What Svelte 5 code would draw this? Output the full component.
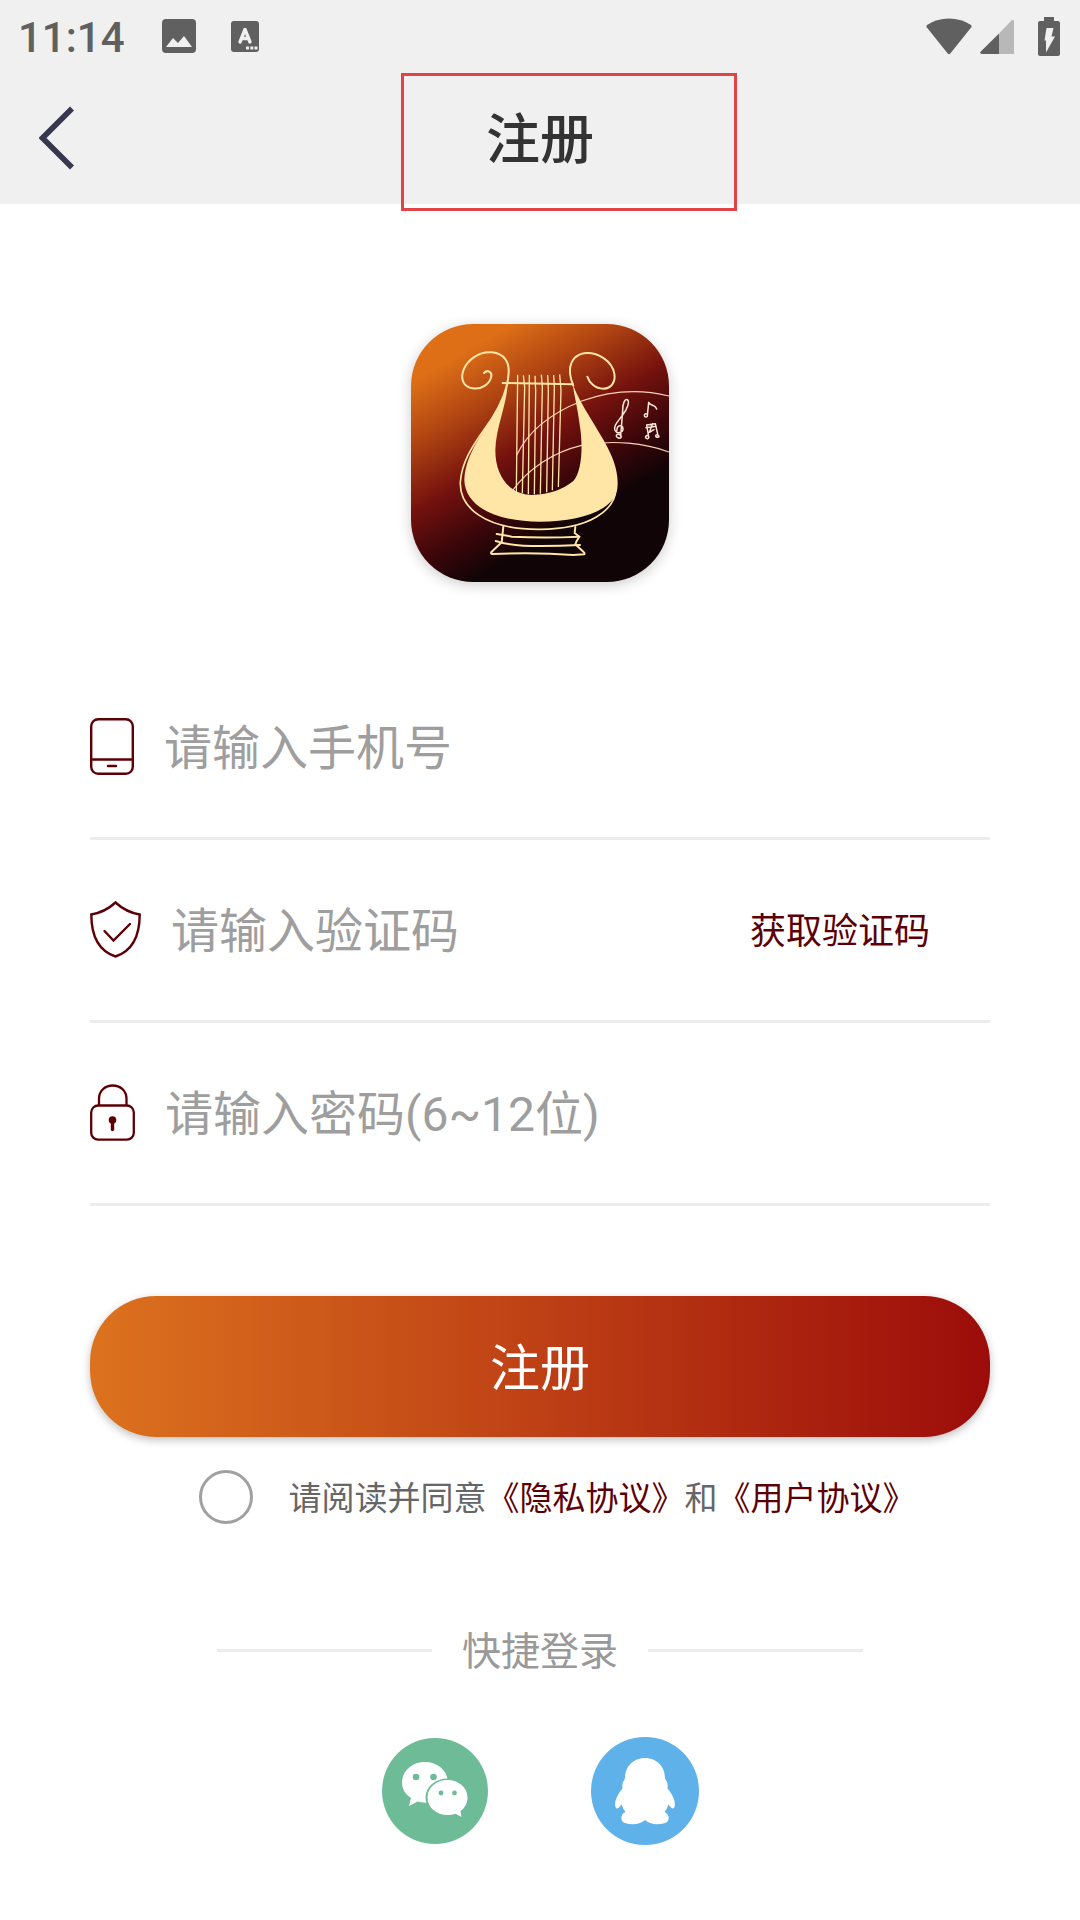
<script>
  let phone = $state('');
  let code = $state('');
  let password = $state('');
  let agreed = $state(false);
</script>

<div class="page">
  <header class="top">
    <div class="status">
      <span class="clock">11:14</span>
      <svg class="pic" width="34" height="34" viewBox="0 0 34 34" aria-hidden="true">
        <rect width="34" height="34" rx="4" fill="#606060" />
        <path d="M4 28 L11 19 L16 24 L22 17 L30 28 Z" fill="#f0f0f0" />
      </svg>
      <svg class="lang" width="28" height="31" viewBox="0 0 28 31" aria-hidden="true">
        <rect width="28" height="31" rx="3" fill="#606060" />
        <path d="M9 21 L14 8.500 L19 21 M10.500 17.500 H17.500" fill="none" stroke="#f0f0f0" stroke-width="3.400" stroke-linecap="round" stroke-linejoin="round" />
        <path d="M15 25.500h3v3h-3z M19.300 25.500h3v3h-3z M23.500 25.500h3v3h-3z" fill="#f0f0f0" />
      </svg>
      <span class="spacer"></span>
      <svg class="wifi" width="46" height="37" viewBox="0 0 46 37" aria-hidden="true">
        <path d="M1 7 Q10.500 0.500 23 0.500 Q35.500 0.500 45 7 Q46 8 45.300 9.200 L24.300 35.500 Q23 37 21.700 35.500 L0.700 9.200 Q0 8 1 7Z" fill="#606060" />
      </svg>
      <svg class="cell" width="34" height="35" viewBox="0 0 34 35" aria-hidden="true">
        <path d="M19 14.500 L31.500 1.500 Q34 -0.500 34 2.500 V35 H19Z" fill="#b8b8b8" />
        <path d="M19 14.500 V35 H2 Q-1 34.500 0.800 32.500Z" fill="#606060" />
      </svg>
      <svg width="22" height="39" viewBox="0 0 22 39" aria-hidden="true">
        <path d="M6 0H16V4H20Q22 4 22 6V37Q22 39 20 39H2Q0 39 0 37V6Q0 4 2 4H6Z" fill="#606060" />
        <path d="M8.500 11H15.500L13.500 19.500H17L8 35.500V23.500H6.500Z" fill="#f0f0f0" />
      </svg>
    </div>
    <div class="nav">
      <button class="back" type="button" aria-label="返回">
        <svg width="36" height="64" viewBox="0 0 36 64" aria-hidden="true">
          <path d="M33 2.500 L3.500 32 L33 61.500" fill="none" stroke="#37384f" stroke-width="5.600" />
        </svg>
      </button>
      <h1>注册</h1>
    </div>
    <div class="mark"></div>
  </header>

  <main>
    <svg class="logo" viewBox="33 41 774 774" role="img" aria-label="logo">
      <defs>
        <linearGradient id="wine" gradientUnits="userSpaceOnUse" x1="104" y1="177" x2="435" y2="741">
          <stop offset="0" stop-color="#de6f17" />
          <stop offset="0.250" stop-color="#af4412" />
          <stop offset="0.510" stop-color="#75120e" />
          <stop offset="0.740" stop-color="#3b060a" />
          <stop offset="0.930" stop-color="#100406" />
        </linearGradient>
      </defs>
      <rect x="33" y="41" width="774" height="774" fill="url(#wine)" />
      <g fill="none" stroke="#fbd3b4" stroke-width="3.500">
        <path d="M350 435 C385 360 450 310 545 272 C640 238 730 238 807 257" />
        <path d="M338 540 C385 475 460 425 545 405 C640 388 735 398 807 425" />
      </g>
      <g fill="none" stroke="#ffe6a6" stroke-width="4">
        <path d="M353 193 L349 545 M370 195 L374 230 L367 548 M388 193 L385 552 M405 196 L407 240 L403 552 M424 193 L427 230 L421 550 M443 194 L445 240 L440 546 M461 194 L463 230 L457 540 M479 192 L483 240 L475 530" />
      </g>
      <g fill="none" stroke="#ffe6a6" stroke-width="6" stroke-linecap="round" stroke-linejoin="round">
        <path d="M308 218 L518 222" />
        <path d="M252 188 C262 177 276 184 274 198 C270 220 246 238 218 234 C190 230 181 206 190 180 C202 148 238 122 276 126 C312 130 328 154 326 186 C325 204 324 212 320 226" />
        <path d="M320 226 C306 280 282 318 252 358 C216 408 185 458 181 515 C178 590 252 658 420 657 C570 656 645 600 648 535" stroke-width="5" />
        <path d="M562 199 C568 218 586 235 610 235 C635 235 647 214 643 190 C636 152 594 124 552 129 C522 134 508 158 510 188 C511 204 516 216 520 226" />
        <path d="M310 648 L305 696 L275 724 Q270 730 278 731 Q410 726 520 734 L552 732 Q556 730 550 724 L526 702 L530 692 L538 679 L524 668 L526 650" />
        <path d="M290 671 Q310 674 335 679 Q430 684 538 679 M287 692 Q325 704 370 706 Q450 708 540 704" />
      </g>
      <path d="M323 224 C318 290 288 350 286 420 C286 500 330 552 395 554 C450 552 488 538 520 512 C548 480 548 400 540 350 C534 300 524 262 518 222 C545 290 592 352 622 410 C648 460 656 500 652 535 C642 600 540 634 420 634 C290 634 196 590 193 510 C195 440 240 380 272 328 C300 284 312 254 323 224Z" fill="#ffe6a6" />
      <g fill="none" stroke="#fde8d8" stroke-width="4.500" stroke-linecap="round" stroke-linejoin="round">
        <path d="M657 383 C645 382 648 368 657 372 C668 378 664 386 655 383 M662 378 L668 300 C668 280 674 265 682 268 C690 274 682 296 668 314 C652 336 640 346 645 360 C652 372 670 368 669 354 C667 342 650 344 651 360" />
        <path d="M742 316 L746 276 C752 288 766 282 770 296 M742 312 C732 306 730 320 738 320 Q743 320 742 312" />
        <path d="M746 380 L740 344 L766 340 L774 376 M738 352 L768 348 M746 378 C738 370 732 384 742 385 Q748 384 746 378 M774 374 C766 370 764 382 774 381 Q780 378 774 374 M758 340 L748 366 L762 358" />
      </g>
    </svg>

    <form onsubmit={(e) => e.preventDefault()}>
      <div class="row">
        <label for="phone" aria-label="手机号">
          <svg width="44" height="57" viewBox="0 0 44 57" fill="none" stroke="#5c0006" stroke-width="2.400" aria-hidden="true">
            <rect x="1.200" y="1.200" width="41.600" height="54.600" rx="7" />
            <path d="M1 41.500H43M18 48H26" stroke-linecap="round" />
          </svg>
        </label>
        <input id="phone" type="tel" placeholder="请输入手机号" bind:value={phone} />
      </div>
      <div class="row">
        <label for="code" aria-label="验证码">
          <svg width="51" height="57" viewBox="0 0 51 57" fill="none" stroke="#5c0006" stroke-width="2.400" aria-hidden="true">
            <path d="M25.500 1.500 C19 7.500 10 12 1.300 13.500 C1.300 35 9 50 25.500 55.500 C42 50 49.700 35 49.700 13.500 C41 12 32 7.500 25.500 1.500Z" />
            <path d="M14.500 30 L23.500 39.500 L40 23" stroke-linecap="round" />
          </svg>
        </label>
        <input id="code" type="text" placeholder="请输入验证码" bind:value={code} />
        <button class="send" type="button">获取验证码</button>
      </div>
      <div class="row">
        <label for="password" aria-label="密码">
          <svg width="45" height="57" viewBox="0 0 45 57" fill="none" stroke="#5c0006" stroke-width="2.300" aria-hidden="true">
            <rect x="1.200" y="21.500" width="42.600" height="34.200" rx="7" />
            <path d="M9 21.500 V15 C9 -3 36.500 -3 36.500 15 V21.500" />
            <circle cx="22.500" cy="36" r="3.800" fill="#5c0006" stroke="none" />
            <path d="M22.500 37V45.500" stroke-width="3.400" stroke-linecap="round" />
          </svg>
        </label>
        <input id="password" type="password" placeholder="请输入密码(6~12位)" bind:value={password} />
      </div>
      <button class="submit" type="submit">注册</button>
      <div class="agree">
        <input id="agree" type="checkbox" bind:checked={agreed} />
        <p><label for="agree">请阅读并同意</label><a href="#privacy">《隐私协议》</a>和<a href="#terms">《用户协议》</a></p>
      </div>
    </form>

    <div class="quick"><span>快捷登录</span></div>
    <div class="social">
      <button type="button" aria-label="微信登录">
        <svg width="108" height="108" viewBox="0 0 108 108" aria-hidden="true">
          <circle cx="54" cy="54" r="53" fill="#6ebb98" />
          <path d="M44 25 C31 25 21 34 21 45.500 C21 52 24.500 57.500 30 61 L28 69 L36.500 64.500 Q41 66 47 65.500 L67 46 C67 34 57 25 44 25Z" fill="#fff" />
          <ellipse cx="66.500" cy="60.500" rx="22" ry="19" fill="#6ebb98" />
          <path d="M66.500 43 C55.500 43 46.500 50.500 46.500 60.500 C46.500 70.500 55.500 78 66.500 78 Q71 78 74.500 76.800 L80.500 80 L79.500 74 C84 71 86.500 66 86.500 60.500 C86.500 50.500 77.500 43 66.500 43Z" fill="#fff" />
          <g fill="#6ebb98">
            <circle cx="35" cy="40" r="3.300" /><circle cx="52.500" cy="40" r="3.300" />
            <circle cx="60" cy="56" r="2.400" /><circle cx="73.500" cy="56" r="2.400" />
          </g>
        </svg>
      </button>
      <button type="button" aria-label="QQ登录">
        <svg width="108" height="108" viewBox="0 0 108 108" aria-hidden="true">
          <circle cx="54" cy="54" r="54" fill="#5eb2e9" />
          <path d="M54 21 C42 21 34 30 34 41 Q33.500 43 32 45 Q31 48 31.500 51.500 C26 58 23 65 24.500 70 Q26 74 30.500 67.500 Q32 72 34.500 75 C29 77 29 85 34 86 C42 88.500 50 87 54 83 C58 87 66 88.500 74 86 C79 85 79 77 73.500 75 Q76 72 77.500 67.500 Q82 74 83.500 70 C85 65 82 58 76.500 51.500 Q77 48 76 45 Q74.500 43 74 41 C74 30 66 21 54 21Z" fill="#fff" />
        </svg>
      </button>
    </div>
  </main>
</div>

<style>
  :global(body) { margin: 0; background: #fff; }
  .page {
    min-height: 100vh;
    background: #fff;
    color: #666;
    font-family: Roboto, "Noto Sans CJK SC", sans-serif;
  }
  button { border: 0; padding: 0; background: none; font: inherit; cursor: pointer; }
  svg { display: block; }
  .top { position: relative; background: #f0f0f0; }
  .status {
    height: 72px;
    padding: 0 20px 0 18px;
    display: flex;
    align-items: center;
  }
  .clock { padding-top: 4px; font-size: 42px; font-weight: 500; line-height: 68px; color: #606060; }
  .pic { margin-left: 37px; }
  .lang { margin-left: 35px; }
  .spacer { flex: 1; }
  .wifi { margin-right: 8px; }
  .cell { margin-right: 24px; }
  .nav {
    height: 132px;
    display: grid;
    grid-template-columns: 1fr auto 1fr;
    align-items: center;
  }
  .back { justify-self: start; padding-left: 39px; }
  h1 { margin: 0; padding-top: 5px; font-size: 54px; line-height: 72px; font-weight: 500; color: #333; }
  .mark {
    position: absolute;
    top: 73px;
    left: calc(50% - 139px);
    box-sizing: border-box;
    width: 336px;
    height: 138px;
    border: 3px solid #e04444;
    pointer-events: none;
  }
  main { padding: 120px 90px 60px; }
  .logo {
    width: 258px;
    height: 258px;
    margin: 0 auto 75px;
    border-radius: 62px;
    box-shadow: 0 3px 14px rgba(0, 0, 0, 0.2);
  }
  .row {
    height: 180px;
    display: flex;
    align-items: center;
    gap: 30px;
    border-bottom: 3px solid #ececec;
  }
  .row input {
    flex: 1;
    min-width: 0;
    padding: 4px 0 0;
    border: 0;
    outline: 0;
    background: none;
    font: inherit;
    font-size: 48px;
    line-height: 72px;
    color: #333;
  }
  .row input::placeholder { color: #9e9e9e; opacity: 1; }
  .row label { padding-bottom: 2px; }
  .send { padding: 4px 60px 0; font-size: 36px; line-height: 54px; color: #5c0006; }
  .submit {
    width: 100%;
    height: 141px;
    padding-bottom: 5px;
    margin-top: 90px;
    border-radius: 66px;
    background: linear-gradient(90deg, #dc721e, #be4015 50%, #9c0c0a);
    box-shadow: 0 3px 8px rgba(0, 0, 0, 0.25);
    color: #fff;
    font-size: 50px;
  }
  .agree {
    display: flex;
    align-items: center;
    justify-content: center;
    gap: 36px;
    margin-top: 33px;
    padding-left: 34px;
  }
  .agree input {
    appearance: none;
    box-sizing: border-box;
    width: 54px;
    height: 54px;
    margin: 0;
    border: 3px solid #a0a0a0;
    border-radius: 50%;
  }
  .agree input:checked { background: #5c0006; }
  .agree p { margin: 0; padding-top: 4px; font-size: 33px; line-height: 50px; }
  .agree a { color: #5c0006; text-decoration: none; }
  .quick {
    display: flex;
    align-items: center;
    gap: 30px;
    margin: 99px 127px 0;
    font-size: 39px;
    line-height: 50px;
    color: #999;
  }
  .quick span { padding-top: 4px; }
  .quick::before, .quick::after { content: ""; flex: 1; height: 3px; background: #ececec; }
  .social { display: flex; justify-content: center; gap: 102px; margin-top: 60px; }
</style>
